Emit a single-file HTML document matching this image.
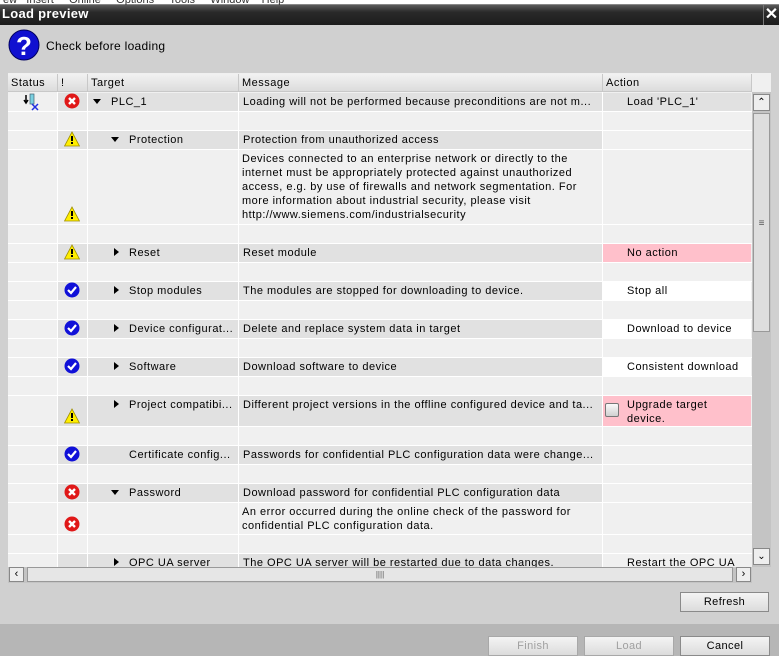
<!DOCTYPE html>
<html><head><meta charset="utf-8"><style>
*{margin:0;padding:0;box-sizing:border-box}
body{width:779px;height:656px;overflow:hidden;background:#d0d0d0;font-family:"Liberation Sans",sans-serif;font-size:11px;color:#000;position:relative}
.a{position:absolute}
.c{position:absolute;white-space:nowrap;overflow:hidden;line-height:13px;padding:3px 4px;letter-spacing:0.5px}
.g{background:#e1e1e1}
.l{background:#f0f0f0}
.p{background:#ffc0cb}
.w{background:#fff}
.btn{position:absolute;height:20px;border:1px solid #8a8a8a;background:linear-gradient(#f4f4f4,#dcdcdc);text-align:center;line-height:18px;font-size:11px;letter-spacing:0.4px}
.ic{position:absolute;left:64px;width:16px;height:16px}
.tri{position:absolute;width:0;height:0}
</style></head><body>
<div class="a" style="left:0;top:0;width:779px;height:5px;background:#fff;border-bottom:1px solid #888"></div>
<div class="a" style="left:0;top:-6px;font-size:11px;color:#333;white-space:nowrap">&nbsp;ew&nbsp;&nbsp;&nbsp;Insert&nbsp;&nbsp;&nbsp;&nbsp;&nbsp;Online&nbsp;&nbsp;&nbsp;&nbsp;&nbsp;Options&nbsp;&nbsp;&nbsp;&nbsp;&nbsp;Tools&nbsp;&nbsp;&nbsp;&nbsp;&nbsp;Window&nbsp;&nbsp;&nbsp;&nbsp;Help</div>
<div class="a" style="left:0;top:5px;width:779px;height:20px;background:linear-gradient(#5a5a5a 0,#2a2a2a 35%,#1c1c1c 100%)"></div>
<div class="a" style="left:2px;top:6px;color:#fff;font-weight:bold;font-size:13px;letter-spacing:0.3px">Load preview</div>
<div class="a" style="left:763px;top:5px;width:16px;height:20px;border-left:1px solid #777;color:#fff;font-size:16px;line-height:20px;text-align:center;font-weight:bold">✕</div>
<svg class="a" style="left:8px;top:29px" width="32" height="32"><circle cx="16" cy="16" r="15" fill="#1010d0" stroke="#000060" stroke-width="1"/><text x="16" y="26" text-anchor="middle" fill="#fff" font-family="Liberation Sans" font-weight="bold" font-size="26">?</text></svg>
<div class="a" style="left:46px;top:39px;font-size:12px;letter-spacing:0.3px">Check before loading</div>

<div class="a" style="left:8px;top:73px;width:763px;height:494px;background:#f0f0f0"></div>
<div class="a" style="left:8px;top:74px;width:744px;height:18px;background:linear-gradient(#f2f2f2,#dcdcdc);border-bottom:1px solid #c8c8c8"></div>
<div class="c" style="left:8px;top:75px;padding:2px 3px">Status</div>
<div class="c" style="left:58px;top:75px;padding:2px 3px">!</div>
<div class="c" style="left:88px;top:75px;padding:2px 3px">Target</div>
<div class="c" style="left:239px;top:75px;padding:2px 3px">Message</div>
<div class="c" style="left:603px;top:75px;padding:2px 3px">Action</div>
<div class="a" style="left:57px;top:74px;width:1px;height:18px;background:#c8c8c8"></div>
<div class="a" style="left:87px;top:74px;width:1px;height:18px;background:#c8c8c8"></div>
<div class="a" style="left:238px;top:74px;width:1px;height:18px;background:#c8c8c8"></div>
<div class="a" style="left:602px;top:74px;width:1px;height:18px;background:#c8c8c8"></div>
<div class="a" style="left:751px;top:74px;width:1px;height:18px;background:#c8c8c8"></div>

<div class="c l" style="left:8px;top:93px;width:49px;height:18px"></div>
<div class="c g" style="left:58px;top:93px;width:29px;height:18px"></div>
<div class="c g" style="left:88px;top:93px;width:150px;height:18px;padding-left:23px">PLC_1</div>
<div class="c g" style="left:239px;top:93px;width:363px;height:18px">Loading will not be performed because preconditions are not m...</div>
<div class="c g" style="left:603px;top:93px;width:148px;height:18px;padding-left:24px">Load 'PLC_1'</div>

<div class="c g" style="left:58px;top:131px;width:29px;height:18px"></div>
<div class="c g" style="left:88px;top:131px;width:150px;height:18px;padding-left:41px">Protection</div>
<div class="c g" style="left:239px;top:131px;width:363px;height:18px">Protection from unauthorized access</div>
<div class="c" style="left:239px;top:150px;width:363px;height:74px;padding:2px 3px 0 3px;line-height:14px">Devices connected to an enterprise network or directly to the<br>internet must be appropriately protected against unauthorized<br>access, e.g. by use of firewalls and network segmentation. For<br>more information about industrial security, please visit<br>http://www.siemens.com/industrialsecurity</div>

<div class="c g" style="left:58px;top:244px;width:29px;height:18px"></div>
<div class="c g" style="left:88px;top:244px;width:150px;height:18px;padding-left:41px">Reset</div>
<div class="c g" style="left:239px;top:244px;width:363px;height:18px">Reset module</div>
<div class="c p" style="left:603px;top:244px;width:148px;height:18px;padding-left:24px">No action</div>

<div class="c g" style="left:58px;top:282px;width:29px;height:18px"></div>
<div class="c g" style="left:88px;top:282px;width:150px;height:18px;padding-left:41px">Stop modules</div>
<div class="c g" style="left:239px;top:282px;width:363px;height:18px">The modules are stopped for downloading to device.</div>
<div class="c w" style="left:603px;top:282px;width:148px;height:18px;padding-left:24px">Stop all</div>

<div class="c g" style="left:58px;top:320px;width:29px;height:18px"></div>
<div class="c g" style="left:88px;top:320px;width:150px;height:18px;padding-left:41px">Device configurat...</div>
<div class="c g" style="left:239px;top:320px;width:363px;height:18px">Delete and replace system data in target</div>
<div class="c w" style="left:603px;top:320px;width:148px;height:18px;padding-left:24px">Download to device</div>

<div class="c g" style="left:58px;top:358px;width:29px;height:18px"></div>
<div class="c g" style="left:88px;top:358px;width:150px;height:18px;padding-left:41px">Software</div>
<div class="c g" style="left:239px;top:358px;width:363px;height:18px">Download software to device</div>
<div class="c w" style="left:603px;top:358px;width:148px;height:18px;padding-left:24px">Consistent download</div>

<div class="c g" style="left:58px;top:396px;width:29px;height:30px"></div>
<div class="c g" style="left:88px;top:396px;width:150px;height:30px;padding-left:41px">Project compatibi...</div>
<div class="c g" style="left:239px;top:396px;width:363px;height:30px">Different project versions in the offline configured device and ta...</div>
<div class="c p" style="left:603px;top:396px;width:148px;height:30px;padding:2px 4px 0 24px;line-height:14px">Upgrade target<br>device.</div>
<div class="a" style="left:605px;top:403px;width:14px;height:14px;border:1px solid #777;border-radius:2px;background:linear-gradient(#fafafa,#d0d0d0)"></div>

<div class="c g" style="left:58px;top:446px;width:29px;height:18px"></div>
<div class="c g" style="left:88px;top:446px;width:150px;height:18px;padding-left:41px">Certificate config...</div>
<div class="c g" style="left:239px;top:446px;width:363px;height:18px">Passwords for confidential PLC configuration data were change...</div>

<div class="c g" style="left:58px;top:484px;width:29px;height:18px"></div>
<div class="c g" style="left:88px;top:484px;width:150px;height:18px;padding-left:41px">Password</div>
<div class="c g" style="left:239px;top:484px;width:363px;height:18px">Download password for confidential PLC configuration data</div>
<div class="c" style="left:239px;top:503px;width:363px;height:31px;padding:2px 3px 0 3px;line-height:14px">An error occurred during the online check of the password for<br>confidential PLC configuration data.</div>

<div class="c g" style="left:58px;top:554px;width:29px;height:13px"></div>
<div class="c g" style="left:88px;top:554px;width:150px;height:13px;padding-left:41px">OPC UA server</div>
<div class="c g" style="left:239px;top:554px;width:363px;height:13px">The OPC UA server will be restarted due to data changes.</div>
<div class="c l" style="left:603px;top:554px;width:148px;height:13px;padding-left:24px">Restart the OPC UA</div>

<div class="a" style="left:57px;top:92px;width:1px;height:475px;background:#fff"></div>
<div class="a" style="left:87px;top:92px;width:1px;height:475px;background:#fff"></div>
<div class="a" style="left:238px;top:92px;width:1px;height:475px;background:#fff"></div>
<div class="a" style="left:602px;top:92px;width:1px;height:475px;background:#fff"></div>
<div class="a" style="left:8px;top:111px;width:744px;height:1px;background:#fff"></div>
<div class="a" style="left:8px;top:130px;width:744px;height:1px;background:#fff"></div>
<div class="a" style="left:8px;top:149px;width:744px;height:1px;background:#fff"></div>
<div class="a" style="left:8px;top:224px;width:744px;height:1px;background:#fff"></div>
<div class="a" style="left:8px;top:243px;width:744px;height:1px;background:#fff"></div>
<div class="a" style="left:8px;top:262px;width:744px;height:1px;background:#fff"></div>
<div class="a" style="left:8px;top:281px;width:744px;height:1px;background:#fff"></div>
<div class="a" style="left:8px;top:300px;width:744px;height:1px;background:#fff"></div>
<div class="a" style="left:8px;top:319px;width:744px;height:1px;background:#fff"></div>
<div class="a" style="left:8px;top:338px;width:744px;height:1px;background:#fff"></div>
<div class="a" style="left:8px;top:357px;width:744px;height:1px;background:#fff"></div>
<div class="a" style="left:8px;top:376px;width:744px;height:1px;background:#fff"></div>
<div class="a" style="left:8px;top:395px;width:744px;height:1px;background:#fff"></div>
<div class="a" style="left:8px;top:426px;width:744px;height:1px;background:#fff"></div>
<div class="a" style="left:8px;top:445px;width:744px;height:1px;background:#fff"></div>
<div class="a" style="left:8px;top:464px;width:744px;height:1px;background:#fff"></div>
<div class="a" style="left:8px;top:483px;width:744px;height:1px;background:#fff"></div>
<div class="a" style="left:8px;top:502px;width:744px;height:1px;background:#fff"></div>
<div class="a" style="left:8px;top:534px;width:744px;height:1px;background:#fff"></div>
<div class="a" style="left:8px;top:553px;width:744px;height:1px;background:#fff"></div>

<div class="tri" style="left:93px;top:99px;border-left:4px solid transparent;border-right:4px solid transparent;border-top:5px solid #000"></div>
<div class="tri" style="left:111px;top:137px;border-left:4px solid transparent;border-right:4px solid transparent;border-top:5px solid #000"></div>
<div class="tri" style="left:111px;top:490px;border-left:4px solid transparent;border-right:4px solid transparent;border-top:5px solid #000"></div>
<div class="tri" style="left:114px;top:248px;border-top:4px solid transparent;border-bottom:4px solid transparent;border-left:5px solid #000"></div>
<div class="tri" style="left:114px;top:286px;border-top:4px solid transparent;border-bottom:4px solid transparent;border-left:5px solid #000"></div>
<div class="tri" style="left:114px;top:324px;border-top:4px solid transparent;border-bottom:4px solid transparent;border-left:5px solid #000"></div>
<div class="tri" style="left:114px;top:362px;border-top:4px solid transparent;border-bottom:4px solid transparent;border-left:5px solid #000"></div>
<div class="tri" style="left:114px;top:400px;border-top:4px solid transparent;border-bottom:4px solid transparent;border-left:5px solid #000"></div>
<div class="tri" style="left:114px;top:558px;border-top:4px solid transparent;border-bottom:4px solid transparent;border-left:5px solid #000"></div>

<svg class="a" style="left:23px;top:93px" width="18" height="18"><path d="M3 2v7M1 7l2 3 2-3" stroke="#000" stroke-width="1.5" fill="none"/><rect x="7" y="1" width="4" height="10" fill="#7ad0e0" stroke="#406070" stroke-width="0.7"/><path d="M9 11l6 6M15 11l-6 6" stroke="#2030e0" stroke-width="1.5"/></svg>

<svg class="ic" style="top:93px" viewBox="0 0 16 16"><circle cx="8" cy="8" r="7.5" fill="#e01818"/><path d="M5 5l6 6M11 5l-6 6" stroke="#fff" stroke-width="2.4"/></svg>
<svg class="ic" style="top:131px" viewBox="0 0 16 16"><path d="M8 1L15.5 15H0.5Z" fill="#ffee00" stroke="#a09000" stroke-width="0.8"/><rect x="7" y="5" width="2" height="5" fill="#000"/><rect x="7" y="11" width="2" height="2" fill="#000"/></svg>
<svg class="ic" style="top:206px" viewBox="0 0 16 16"><path d="M8 1L15.5 15H0.5Z" fill="#ffee00" stroke="#a09000" stroke-width="0.8"/><rect x="7" y="5" width="2" height="5" fill="#000"/><rect x="7" y="11" width="2" height="2" fill="#000"/></svg>
<svg class="ic" style="top:244px" viewBox="0 0 16 16"><path d="M8 1L15.5 15H0.5Z" fill="#ffee00" stroke="#a09000" stroke-width="0.8"/><rect x="7" y="5" width="2" height="5" fill="#000"/><rect x="7" y="11" width="2" height="2" fill="#000"/></svg>
<svg class="ic" style="top:282px" viewBox="0 0 16 16"><circle cx="8" cy="8" r="7.5" fill="#1010d8"/><path d="M4 8l3 3 5-6" stroke="#fff" stroke-width="2.2" fill="none"/></svg>
<svg class="ic" style="top:320px" viewBox="0 0 16 16"><circle cx="8" cy="8" r="7.5" fill="#1010d8"/><path d="M4 8l3 3 5-6" stroke="#fff" stroke-width="2.2" fill="none"/></svg>
<svg class="ic" style="top:358px" viewBox="0 0 16 16"><circle cx="8" cy="8" r="7.5" fill="#1010d8"/><path d="M4 8l3 3 5-6" stroke="#fff" stroke-width="2.2" fill="none"/></svg>
<svg class="ic" style="top:408px" viewBox="0 0 16 16"><path d="M8 1L15.5 15H0.5Z" fill="#ffee00" stroke="#a09000" stroke-width="0.8"/><rect x="7" y="5" width="2" height="5" fill="#000"/><rect x="7" y="11" width="2" height="2" fill="#000"/></svg>
<svg class="ic" style="top:446px" viewBox="0 0 16 16"><circle cx="8" cy="8" r="7.5" fill="#1010d8"/><path d="M4 8l3 3 5-6" stroke="#fff" stroke-width="2.2" fill="none"/></svg>
<svg class="ic" style="top:484px" viewBox="0 0 16 16"><circle cx="8" cy="8" r="7.5" fill="#e01818"/><path d="M5 5l6 6M11 5l-6 6" stroke="#fff" stroke-width="2.4"/></svg>
<svg class="ic" style="top:516px" viewBox="0 0 16 16"><circle cx="8" cy="8" r="7.5" fill="#e01818"/><path d="M5 5l6 6M11 5l-6 6" stroke="#fff" stroke-width="2.4"/></svg>

<div class="a" style="left:752px;top:92px;width:19px;height:475px;background:#c4c4c4"></div>
<div class="a" style="left:753px;top:94px;width:17px;height:17px;border:1px solid #888;background:#eee;text-align:center;line-height:15px;font-size:10px">&#8963;</div>
<div class="a" style="left:753px;top:113px;width:17px;height:219px;border:1px solid #999;background:#dedede;text-align:center;line-height:219px;font-size:10px;color:#555">≡</div>
<div class="a" style="left:753px;top:548px;width:17px;height:17px;border:1px solid #888;background:#eee;text-align:center;line-height:15px;font-size:10px">&#8964;</div>
<div class="a" style="left:8px;top:567px;width:744px;height:16px;background:#c4c4c4"></div>
<div class="a" style="left:9px;top:567px;width:15px;height:15px;border:1px solid #888;background:#eee;text-align:center;line-height:13px;font-size:11px">‹</div>
<div class="a" style="left:27px;top:567px;width:706px;height:15px;border:1px solid #999;background:#e6e6e6;text-align:center;line-height:13px;font-size:8px;color:#555">||||</div>
<div class="a" style="left:736px;top:567px;width:15px;height:15px;border:1px solid #888;background:#eee;text-align:center;line-height:13px;font-size:11px">›</div>

<div class="btn" style="left:680px;top:592px;width:89px">Refresh</div>
<div class="a" style="left:0;top:624px;width:779px;height:32px;background:#b6b6b6"></div>
<div class="btn" style="left:488px;top:636px;width:90px;color:#a0a0a0;border-color:#a8a8a8">Finish</div>
<div class="btn" style="left:584px;top:636px;width:90px;color:#a0a0a0;border-color:#a8a8a8">Load</div>
<div class="btn" style="left:680px;top:636px;width:90px">Cancel</div>
</body></html>
